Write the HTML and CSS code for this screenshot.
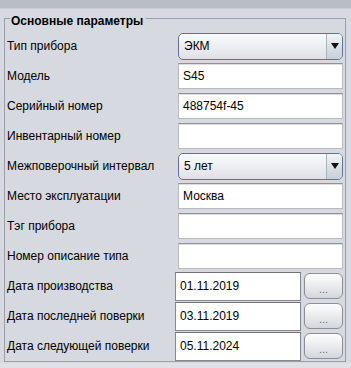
FILE: index.html
```html
<!DOCTYPE html>
<html lang="ru">
<head>
    <meta charset="UTF-8">
    <title>Основные параметры</title>
    <link rel="stylesheet" href="styles.css">
</head>
<body>

<div class="topbar"></div>

<fieldset class="group">
    <legend>Основные параметры</legend>

    <div class="form">
        <div class="label">Тип прибора</div>
        <div class="combo">
            <span class="combo-text">ЭКМ</span>
            <span class="combo-arrow"><svg width="8" height="6" viewBox="0 0 8 6"><path d="M0 0H8L4 6Z" fill="#111"/></svg></span>
        </div>

        <div class="label">Модель</div>
        <input class="field" type="text" value="S45">

        <div class="label">Серийный номер</div>
        <input class="field" type="text" value="488754f-45">

        <div class="label">Инвентарный номер</div>
        <input class="field" type="text" value="">

        <div class="label">Межповерочный интервал</div>
        <div class="combo">
            <span class="combo-text">5 лет</span>
            <span class="combo-arrow"><svg width="8" height="6" viewBox="0 0 8 6"><path d="M0 0H8L4 6Z" fill="#111"/></svg></span>
        </div>

        <div class="label">Место эксплуатации</div>
        <input class="field" type="text" value="Москва">

        <div class="label">Тэг прибора</div>
        <input class="field" type="text" value="">

        <div class="label">Номер описание типа</div>
        <input class="field" type="text" value="">

        <div class="label">Дата производства</div>
        <div class="date-row">
            <input class="date-field" type="text" value="01.11.2019">
            <button class="pick">...</button>
        </div>

        <div class="label">Дата последней поверки</div>
        <div class="date-row">
            <input class="date-field" type="text" value="03.11.2019">
            <button class="pick">...</button>
        </div>

        <div class="label">Дата следующей поверки</div>
        <div class="date-row">
            <input class="date-field" type="text" value="05.11.2024">
            <button class="pick">...</button>
        </div>
    </div>
</fieldset>

<div class="bottombar"></div>

</body>
</html>
```

FILE: styles.css
```css
/* Панель в стиле Nimbus */
body {
    margin: 0;
    background-color: #d6d9df;
    font-family: "Liberation Sans", Arial, sans-serif;
    font-size: 12px;
    color: #000;
}

.topbar {
    height: 8px;
    background-color: #b9bdc4;
    border-bottom: 1px solid #c9ccd2;
}

.group {
    margin: 0 5px 0 4px;
    padding: 3px 2px 0 2px;
    border: 1px solid #9b9fa7;
    min-width: 0;
}

.group legend {
    margin-left: 3px;
    padding: 5px 3px 0 1px;
    font-weight: bold;
    font-size: 12px;
    line-height: 14px;
}

.form {
    display: grid;
    grid-template-columns: 168px 168px;
    grid-auto-rows: 30px;
    align-items: center;
}

.label {
    white-space: nowrap;
}

/* Поля ввода */
.field, .date-field {
    box-sizing: border-box;
    font-family: inherit;
    font-size: 12px;
    color: #000;
    background-color: #fff;
    outline: none;
    margin: 0;
}

.field {
    margin-left: 3px;
    width: 165px;
    height: 26px;
    padding: 0 4px;
    border: 1px solid #b7babf;
    border-top-color: #8f9398;
    box-shadow: inset 0 1px 0 #dcdde0;
}

.date-field {
    width: 126px;
    height: 29px;
    padding: 0 4px;
    border: 1px solid #85898f;
    border-top-color: #6f7378;
}

.date-row {
    display: flex;
    align-items: center;
    gap: 3px;
}

.pick {
    width: 39px;
    height: 26px;
    padding: 6px 0 0;
    border: 1px solid #8a8f97;
    border-radius: 6px;
    background: linear-gradient(#fdfdfd, #e9ebee 50%, #d3d7dc);
    font-family: inherit;
    font-size: 11px;
    color: #6d717a;
    line-height: 12px;
}

/* Комбобокс */
.combo {
    margin-left: 3px;
    width: 165px;
    height: 27px;
    box-sizing: border-box;
    display: flex;
    border: 1px solid #5b7696;
    border-radius: 5px;
    background: linear-gradient(#fbfbfc, #eceef1 50%, #dde1e6);
    overflow: hidden;
}

.combo-text {
    flex: 1;
    padding-left: 5px;
    line-height: 25px;
}

.combo-arrow {
    width: 15px;
    display: flex;
    align-items: center;
    justify-content: center;
    border-left: 1px solid #a9b2be;
    background: linear-gradient(#f3f5f7, #dbe0e6 50%, #c8cfd8);
}

.bottombar {
    margin-top: 1px;
    height: 7px;
    background-color: #dfe1e5;
}
```
